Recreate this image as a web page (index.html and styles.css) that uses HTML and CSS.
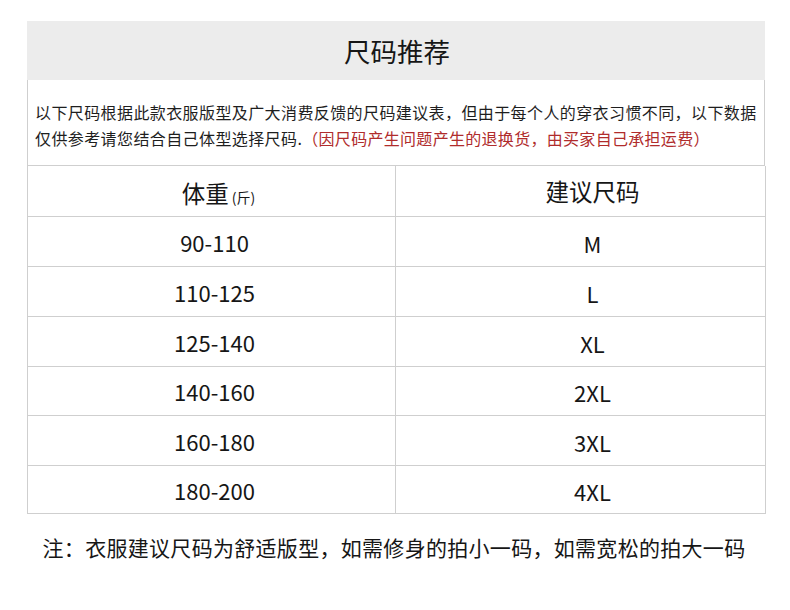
FILE: index.html
```html
<!DOCTYPE html>
<html lang="zh-CN">
<head>
<meta charset="utf-8">
<title>尺码推荐</title>
<link rel="stylesheet" href="styles.css">
</head>
<body>
<div class="sheet">
  <div class="title">尺码推荐</div>
  <div class="notes">
    <p>以下尺码根据此款衣服版型及广大消费反馈的尺码建议表，但由于每个人的穿衣习惯不同，以下数据仅供参考请您结合自己体型选择尺码.<span class="red">（因尺码产生问题产生的退换货，由买家自己承担运费）</span></p>
  </div>
  <div class="table">
    <div class="cell head left">体重<span class="unit">(斤)</span></div>
    <div class="cell head right">建议尺码</div>
    <div class="cell left">90-110</div><div class="cell right">M</div>
    <div class="cell left">110-125</div><div class="cell right">L</div>
    <div class="cell left">125-140</div><div class="cell right">XL</div>
    <div class="cell left">140-160</div><div class="cell right">2XL</div>
    <div class="cell left">160-180</div><div class="cell right">3XL</div>
    <div class="cell left">180-200</div><div class="cell right">4XL</div>
  </div>
  <p class="footnote">注：衣服建议尺码为舒适版型，如需修身的拍小一码，如需宽松的拍大一码</p>
</div>
</body>
</html>
```

FILE: styles.css
```css
* { box-sizing: border-box; }
html, body { margin: 0; padding: 0; background: #ffffff; }
body {
  font-family: "Noto Sans CJK SC", "Noto Sans", sans-serif;
  color: #1e1e1e;
}
.sheet {
  width: 738px;
  margin: 21px 0 0 27px;
}
.title {
  height: 59px;
  background: #ececec;
  font-size: 26.5px;
  line-height: 59px;
  text-align: center;
  padding-left: 2px;
  color: #161616;
}
.notes {
  height: 85px;
  border-left: 1px solid #cfcfcf;
  border-right: 1px solid #cfcfcf;
  padding: 19px 4px 0 7px;
}
.notes p {
  margin: 0;
  font-size: 16px;
  letter-spacing: 0.4px;
  line-height: 26px;
  color: #1e1e1e;
}
.red { color: #b02c2c; letter-spacing: 0.3px; }
.table {
  display: grid;
  grid-template-columns: 368px 370px;
  grid-template-rows: 51px 50px 50px 50px 49px 50px 48px;
  border-top: 1px solid #cfcfcf;
  border-left: 1px solid #cfcfcf;
}
.cell {
  display: flex;
  align-items: center;
  justify-content: center;
  border-right: 1px solid #cfcfcf;
  border-bottom: 1px solid #cfcfcf;
  font-size: 22px;
  color: #161616;
}
.cell.left { padding-left: 6px; }
.cell.right { padding-left: 24px; padding-top: 2px; }
.cell.head { font-size: 23.5px; padding-top: 0; }
.cell.head.left { padding-left: 14px; align-items: baseline; padding-top: 10px; }
.unit { font-size: 14px; margin-left: 3px; }
.footnote {
  margin: 19px 0 0 0;
  padding-right: 4px;
  text-align: center;
  font-size: 21px;
  letter-spacing: 0.3px;
  line-height: 28px;
  color: #161616;
}
```
